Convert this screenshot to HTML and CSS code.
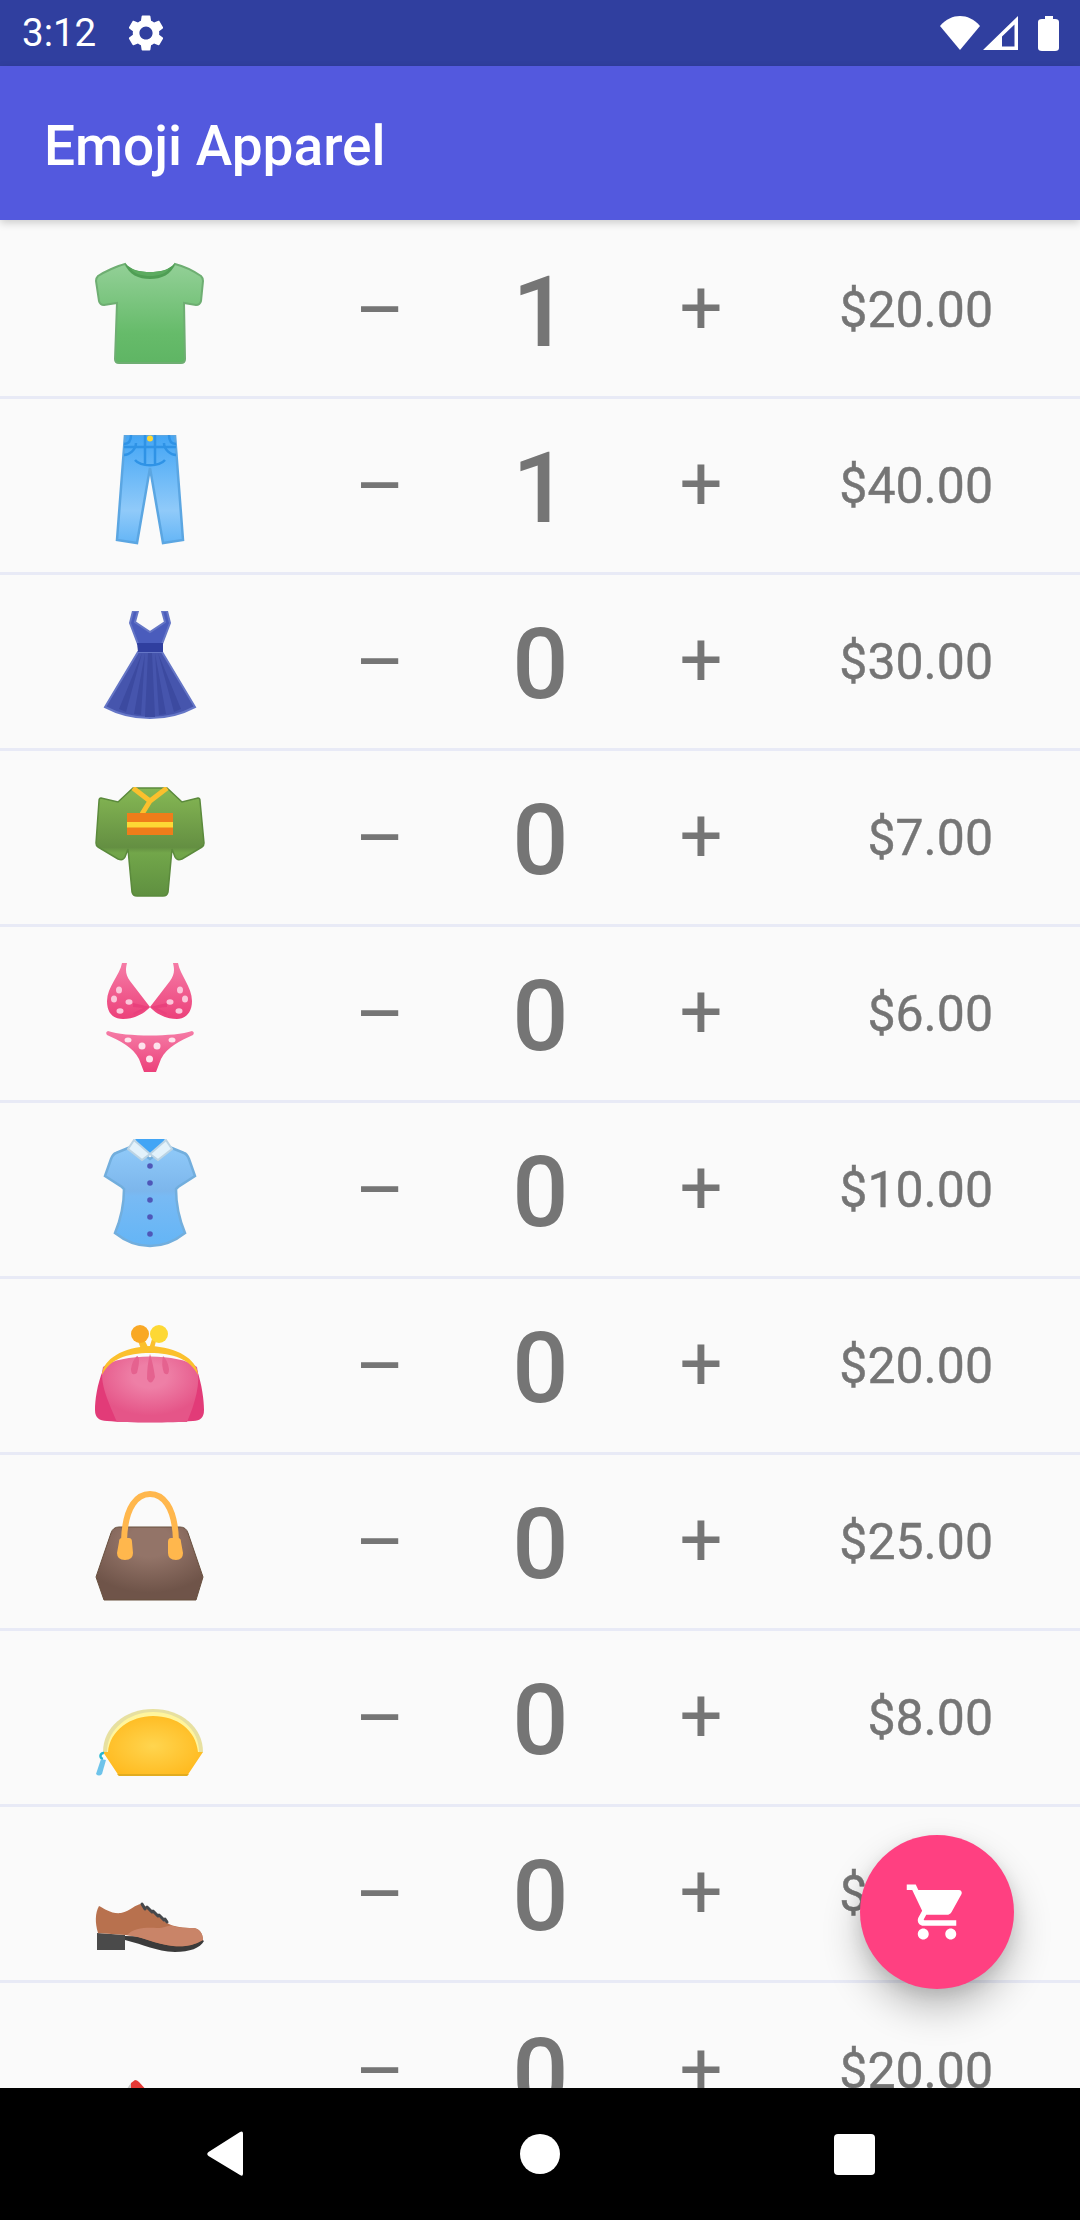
FILE: index.html
```html
<!DOCTYPE html>
<html lang="en">
<head>
    <meta charset="UTF-8">
    <meta name="viewport" content="width=device-width, initial-scale=1.0">
    <title>Emoji Apparel</title>
    <link rel="stylesheet" href="styles.css">
</head>
<body>

    <!-- Status bar -->
    <div class="status-bar">
        <span class="status-time">3:12</span>
        <svg class="status-gear" viewBox="0 0 24 24"><path fill="#fff" d="M19.14 12.94c.04-.3.06-.61.06-.94 0-.32-.02-.64-.07-.94l2.03-1.58c.18-.14.23-.41.12-.61l-1.92-3.32c-.12-.22-.37-.29-.59-.22l-2.39.96c-.5-.38-1.03-.7-1.62-.94l-.36-2.54c-.04-.24-.24-.41-.48-.41h-3.84c-.24 0-.43.17-.47.41l-.36 2.54c-.59.24-1.13.57-1.62.94l-2.39-.96c-.22-.08-.47 0-.59.22L2.74 8.87c-.12.21-.08.47.12.61l2.03 1.58c-.05.3-.09.63-.09.94s.02.64.07.94l-2.03 1.58c-.18.14-.23.41-.12.61l1.92 3.32c.12.22.37.29.59.22l2.39-.96c.5.38 1.03.7 1.62.94l.36 2.54c.05.24.24.41.48.41h3.84c.24 0 .44-.17.47-.41l.36-2.54c.59-.24 1.13-.56 1.62-.94l2.39.96c.22.08.47 0 .59-.22l1.92-3.32c.12-.22.07-.47-.12-.61l-2.01-1.58zM12 15.6c-1.98 0-3.6-1.62-3.6-3.6s1.62-3.6 3.6-3.6 3.6 1.62 3.6 3.6-1.62 3.6-3.6 3.6z"/></svg>
        <svg class="status-icons" viewBox="0 0 124 36">
            <path fill="#fff" d="M1 11 C7 4 14 1 21 1 C28 1 35 4 41 11 L21 35 Z"/>
            <path fill="#fff" fill-rule="evenodd" d="M44 35 L79 1 V35 Z M63 31.500 H75.500 V9.500 L63 21.500 Z"/>
            <path fill="#fff" d="M106 4 V1 H114 V4 H116 Q120 4 120 7 V33 Q120 36 116 36 H103 Q99 36 99 33 V7 Q99 4 103 4 Z"/>
        </svg>
    </div>

    <!-- App bar -->
    <header class="app-bar">
        <h1 class="app-title">Emoji Apparel</h1>
    </header>

    <!-- Product list -->
    <main class="product-list">

        <div class="product-row">
            <svg class="product-emoji" viewBox="0 0 110 110">
                <defs><linearGradient id="shirtFill" x1="0" y1="0" x2="0" y2="1"><stop offset="0" stop-color="#93d097"/><stop offset="0.7" stop-color="#66bb6a"/><stop offset="1" stop-color="#5fb564"/></linearGradient></defs>
                <path fill="url(#shirtFill)" stroke="#6eae72" stroke-width="2" d="M30 5 C22 7 9 13 3 17 Q1 19 1 22 L4 42 Q5 46 9 46 L22 44 L20 100 Q20 104 24 104 L86 104 Q90 104 90 100 L89 44 L101 46 Q105 46 106 42 L108 22 Q108 19 106 17 C100 13 88 7 80 5 C75 13 65 15 55 15 C45 15 35 13 30 5 Z"/>
                <path fill="#4f9e54" d="M30 4 C33 16 44 20 55 20 C66 20 77 16 80 4 C74 11 65 13 55 13 C45 13 36 11 30 4 Z"/>
                <path fill="#5cab60" d="M35 9 C40 12 47 13 55 13 C63 13 70 12 75 9 C71 15 63 17 55 17 C47 17 39 15 35 9 Z"/>
            </svg>
            <span class="qty-btn qty-minus">–</span>
            <span class="qty-value">1</span>
            <span class="qty-btn">+</span>
            <span class="product-price">$20.00</span>
        </div>

        <div class="product-row">
            <svg class="product-emoji" viewBox="0 0 110 110">
                <defs><linearGradient id="jeansFill" x1="0" y1="0" x2="0" y2="1"><stop offset="0" stop-color="#42a5f5"/><stop offset="0.7" stop-color="#90caf9"/><stop offset="1" stop-color="#64b5f6"/></linearGradient></defs>
                <path fill="url(#jeansFill)" stroke="#5ba6e2" stroke-width="2.500" d="M30 0 L22 105 L42 108 L55 33 L68 108 L88 105 L80 0 Z"/>
                <path fill="none" stroke="#2f93e6" stroke-width="2.500" d="M29 9 C34 9 36 5 36 0 M81 9 C76 9 74 5 74 0 M29 12 H81 M29 20 C34 20 41 15 41 8 M81 20 C76 20 69 15 69 8 M50 0 V30 M60 0 V30 M40 25 C46 32 64 32 70 25"/>
                <circle cx="55" cy="3.500" r="3" fill="#fdd835"/>
            </svg>
            <span class="qty-btn qty-minus">–</span>
            <span class="qty-value">1</span>
            <span class="qty-btn">+</span>
            <span class="product-price">$40.00</span>
        </div>

        <div class="product-row">
            <svg class="product-emoji" viewBox="0 0 110 110">
                <path fill="#4a5cbc" stroke="#6576c6" stroke-width="2" d="M38 0 L35 12 L43 33 L67 33 L75 12 L72 0 L67 0 L70 11 L55 21 L40 11 L43 0 Z"/>
                <path fill="#4655ad" stroke="#6576c6" stroke-width="2" d="M43 41 L67 41 L100 96 C85 104 70 107 55 107 C40 107 25 104 10 96 Z"/>
                <path fill="#3c4aa0" d="M50 42 L46 104 L39 103 Z M60 42 L64 104 L71 103 Z M47 42 L24 98 L31 101 Z M63 42 L86 98 L79 101 Z M53 42 H57 L60 106 H50 Z"/>
                <path fill="#303f9f" d="M42 32 H68 V41 H43 Z"/>
            </svg>
            <span class="qty-btn qty-minus">–</span>
            <span class="qty-value">0</span>
            <span class="qty-btn">+</span>
            <span class="product-price">$30.00</span>
        </div>

        <div class="product-row">
            <svg class="product-emoji" viewBox="0 0 110 110">
                <defs><linearGradient id="kimonoFill" x1="0" y1="0" x2="0" y2="1"><stop offset="0" stop-color="#86b854"/><stop offset="0.55" stop-color="#648f42"/><stop offset="0.6" stop-color="#72a64a"/><stop offset="1" stop-color="#5f9040"/></linearGradient></defs>
                <path fill="url(#kimonoFill)" stroke="#5b8a3c" stroke-width="1.500" d="M38 1 L23 15 L6 11 Q4 11 4 14 L1 56 Q1 59 3 60 L23 72 Q28 74 30 70 L33 62 L37 105 Q38 109 42 109 L68 109 Q72 109 73 105 L77 62 L80 70 Q82 74 87 72 L107 60 Q109 59 109 56 L105 14 Q105 11 103 11 L87 15 L72 1 Z"/>
                <path fill="none" stroke="#fbc02d" stroke-width="5" d="M38 1 L55 14 L72 1 M55 14 L47 27"/>
                <rect x="32" y="26" width="46" height="22" fill="#ef7d1a"/>
                <rect x="32" y="35" width="46" height="5.500" fill="#fdd835"/>
            </svg>
            <span class="qty-btn qty-minus">–</span>
            <span class="qty-value">0</span>
            <span class="qty-btn">+</span>
            <span class="product-price">$7.00</span>
        </div>

        <div class="product-row">
            <svg class="product-emoji" viewBox="0 0 110 110">
                <defs><linearGradient id="bikiniFill" x1="0" y1="0" x2="0" y2="1"><stop offset="0" stop-color="#f57ca6"/><stop offset="1" stop-color="#ec407a"/></linearGradient></defs>
                <path fill="url(#bikiniFill)" d="M27 0 L32 0 C30 8 31 12 35 18 C41 26 49 36 55 44 C61 36 69 26 75 18 C79 12 80 8 78 0 L83 0 C85 12 97 24 97 38 C97 50 90 56 82 56 C70 56 60 50 55 44 C50 50 40 56 28 56 C18 56 12 50 12 38 C12 24 25 12 27 0 Z"/>
                <path fill="#e9407c" d="M55 44 L38 40 L38 44 L48 45 L38 50 L39 52 Z M55 44 L72 40 L72 44 L62 45 L72 50 L71 52 Z"/>
                <g fill="#fbc6da">
                    <ellipse cx="24" cy="27" rx="3" ry="3.500"/><ellipse cx="19" cy="36" rx="3" ry="3.500"/><ellipse cx="34" cy="39" rx="3.500" ry="2.800"/><ellipse cx="25" cy="48" rx="3.500" ry="2.800"/>
                    <ellipse cx="85" cy="27" rx="3" ry="3.500"/><ellipse cx="90" cy="36" rx="3" ry="3.500"/><ellipse cx="75" cy="39" rx="3.500" ry="2.800"/><ellipse cx="84" cy="48" rx="3.500" ry="2.800"/>
                </g>
                <path fill="url(#bikiniFill)" d="M13 68 C30 74 80 74 97 68 Q100 69 98 72 C85 78 72 84 66 96 L61 109 H49 L44 96 C38 84 25 78 12 72 Q10 69 13 68 Z"/>
                <g fill="#fde3ec">
                    <ellipse cx="33" cy="77" rx="3.500" ry="2.500"/><circle cx="47" cy="83" r="3.500"/><circle cx="62" cy="83" r="3.500"/><ellipse cx="77" cy="77" rx="3.500" ry="2.500"/><circle cx="54.500" cy="96" r="3.500"/>
                </g>
            </svg>
            <span class="qty-btn qty-minus">–</span>
            <span class="qty-value">0</span>
            <span class="qty-btn">+</span>
            <span class="product-price">$6.00</span>
        </div>

        <div class="product-row">
            <svg class="product-emoji" viewBox="0 0 110 110">
                <defs><linearGradient id="blouseFill" x1="0" y1="0" x2="0" y2="1"><stop offset="0" stop-color="#90caf9"/><stop offset="0.45" stop-color="#7cb6ec"/><stop offset="0.5" stop-color="#78baf4"/><stop offset="1" stop-color="#64b5f6"/></linearGradient></defs>
                <path fill="#42a5f5" d="M40 0 H70 L60 16 H50 Z"/>
                <path fill="url(#blouseFill)" stroke="#72aedd" stroke-width="2.500" d="M38 7 L21 14 Q18 15 16 20 L10 37 L27 48 L29 50 C29 68 25 82 20 94 C30 102 42 107 55 107 C68 107 80 102 90 94 C85 82 81 68 81 50 L83 48 L100 37 L94 20 Q92 15 89 14 L72 7 L55 20 Z"/>
                <path fill="#e3f2fb" stroke="#bcd4e4" stroke-width="2" d="M39 1 L33 10 L47 21 L55 15 L63 21 L77 10 L71 1 L55 15 Z"/>
                <g fill="#4f57b8"><circle cx="55" cy="27" r="2.800"/><circle cx="55" cy="44" r="2.800"/><circle cx="55" cy="61" r="2.800"/><circle cx="55" cy="78" r="2.800"/><circle cx="55" cy="95" r="2.800"/></g>
            </svg>
            <span class="qty-btn qty-minus">–</span>
            <span class="qty-value">0</span>
            <span class="qty-btn">+</span>
            <span class="product-price">$10.00</span>
        </div>

        <div class="product-row">
            <svg class="product-emoji" viewBox="0 0 110 110">
                <defs><radialGradient id="purseFill" cx="0.5" cy="0.3" r="0.6"><stop offset="0.3" stop-color="#ee7fa6"/><stop offset="1" stop-color="#e55588"/></radialGradient></defs>
                <path fill="#e23b78" d="M8 55 C2 70 0 85 0 95 Q0 106 12 106 C35 108 75 108 98 106 Q109 106 109 95 C109 85 107 70 102 55 Z"/>
                <path fill="url(#purseFill)" d="M8 52 C25 38 85 38 102 52 C106 68 100 88 92 107 H22 C14 88 4 68 8 52 Z"/>
                <path fill="#fbc02d" d="M7 60 C8 44 28 32 55 31 C82 32 102 44 103 60 C95 44 78 38 55 38 C32 38 15 44 7 60 Z"/>
                <path fill="#e5628f" d="M42 41 Q46 42 42 58 Q36 62 36 54 Q37 46 42 41 Z M55 39 Q58 48 60 62 Q56 72 52 64 Q52 50 55 39 Z M68 41 Q73 46 74 54 Q74 62 69 58 Q66 50 68 41 Z"/>
                <path fill="#fbc02d" d="M48 22 L54 34 L46 34 L43 26 Z M61 26 L59 34 L54 34 L57 24 Z"/>
                <circle cx="45" cy="19" r="9" fill="#f9a825"/>
                <circle cx="64" cy="19" r="9" fill="#fdd835"/>
            </svg>
            <span class="qty-btn qty-minus">–</span>
            <span class="qty-value">0</span>
            <span class="qty-btn">+</span>
            <span class="product-price">$20.00</span>
        </div>

        <div class="product-row">
            <svg class="product-emoji" viewBox="0 0 110 110">
                <defs><radialGradient id="bagFill" cx="0.5" cy="0.2" r="0.7"><stop offset="0.3" stop-color="#937468"/><stop offset="1" stop-color="#6f5449"/></radialGradient></defs>
                <path fill="url(#bagFill)" stroke="#68503f" stroke-width="1" d="M24 36 H85 Q91 36 93 42 L108 86 L101 109 H9 L1 86 L16 42 Q18 36 24 36 Z"/>
                <path fill="none" stroke="#ffb74d" stroke-width="6" d="M29 50 C30 14 43 3 55 3 C67 3 80 14 81 50"/>
                <path fill="#ffb74d" d="M27 47 H34 Q37 47 37 51 L38 62 Q38 69 30 69 Q22 69 22 62 L24 51 Q24 47 27 47 Z M76 47 H83 Q86 47 86 51 L88 62 Q88 69 81 69 Q73 69 73 62 L73 51 Q73 47 76 47 Z"/>
            </svg>
            <span class="qty-btn qty-minus">–</span>
            <span class="qty-value">0</span>
            <span class="qty-btn">+</span>
            <span class="product-price">$25.00</span>
        </div>

        <div class="product-row">
            <svg class="product-emoji" viewBox="0 0 110 110">
                <defs><radialGradient id="pouchFill" cx="0.5" cy="0.5" r="0.6"><stop offset="0" stop-color="#ffd54f"/><stop offset="1" stop-color="#ffb81c"/></radialGradient></defs>
                <path fill="#e7e0a0" d="M8 85 C8 60 30 42 58 42 C86 42 108 60 108 85 L100 88 H14 Z"/>
                <path fill="#fff59d" d="M12 85 C12 62 34 45 58 45 C84 45 104 62 104 85 Z"/>
                <path fill="url(#pouchFill)" d="M13 85 C15 63 36 49 58 49 C82 49 101 63 103 85 L108 85 L92 109 H24 L8 85 Z"/>
                <path fill="#e2ac1f" d="M22 107 H94 L92 109 H24 Z"/>
                <path fill="none" stroke="#26b6cf" stroke-width="2.500" d="M8 92 A3 3 0 1 1 9 86"/>
                <path fill="#6ec3ea" d="M6 92 L11 93 L7 107 Q4 110 1 107 Z"/>
            </svg>
            <span class="qty-btn qty-minus">–</span>
            <span class="qty-value">0</span>
            <span class="qty-btn">+</span>
            <span class="product-price">$8.00</span>
        </div>

        <div class="product-row">
            <svg class="product-emoji" viewBox="0 0 110 110">
                <path fill="#4a4a4a" d="M2 90 L30 92 L30 107 H2 Z"/>
                <path fill="#3b3b3b" d="M30 97 C50 102 60 108 80 109 C95 109 105 105 109 98 L105 95 L30 93 Z"/>
                <path fill="#b8714e" d="M4 63 C10 66 16 71 26 70 C36 68 40 61 47 61 L54 66 L72 80 C78 84 90 85 98 85 C104 85 108 90 108 97 C98 103 88 104 78 103 C60 101 48 93 30 92 L3 90 C0 80 0 70 4 63 Z"/>
                <path fill="#c98468" d="M32 92 C38 85 52 84 62 85 C70 85 76 81 78 83 C84 85 92 85 98 85 C104 85 108 90 108 97 C98 103 88 104 78 103 C60 101 48 94 32 92 Z"/>
                <path fill="none" stroke="#45474b" stroke-width="3" stroke-linecap="round" d="M47 61 L50 66 M52 64 L57 69 M58 68 L63 73 M64 72 L69 77 M70 76 L72 79"/>
            </svg>
            <span class="qty-btn qty-minus">–</span>
            <span class="qty-value">0</span>
            <span class="qty-btn">+</span>
            <span class="product-price">$20.00</span>
        </div>

        <div class="product-row">
            <svg class="product-emoji" viewBox="0 0 110 110">
                <path fill="#c9c9c9" d="M0 72 L5 68 L9 72 Z M29 72 L36 62 L36 72 Z"/>
                <path fill="#e53935" d="M36 62 L40 59 Q42 59 44 61 L54 72 H36 Z"/>
            </svg>
            <span class="qty-btn qty-minus">–</span>
            <span class="qty-value">0</span>
            <span class="qty-btn">+</span>
            <span class="product-price">$20.00</span>
        </div>

    </main>

    <!-- Cart button -->
    <button class="cart-fab">
        <svg class="cart-icon" viewBox="0 0 24 24"><path fill="#fff" d="M7 18c-1.100 0-1.990.9-1.990 2S5.900 22 7 22s2-.9 2-2-.9-2-2-2zM1 2v2h2l3.600 7.590-1.350 2.450c-.16.28-.25.61-.25.96 0 1.100.9 2 2 2h12v-2H7.420c-.14 0-.25-.11-.25-.25l.03-.12.9-1.630h7.450c.75 0 1.410-.41 1.750-1.030l3.580-6.470c.08-.14.12-.31.12-.48 0-.55-.45-1-1-1H5.210l-.94-2H1zm16 16c-1.100 0-1.990.9-1.990 2s.89 2 1.990 2 2-.9 2-2-.9-2-2-2z"/></svg>
    </button>

    <!-- Navigation bar -->
    <nav class="nav-bar">
        <svg class="nav-icon" viewBox="0 0 66 66"><path fill="#fff" d="M50 12.500 V52.500 Q50 56 47 54 L15.500 35 Q13 33 15.500 31 L47 11 Q50 9.500 50 12.500 Z"/></svg>
        <svg class="nav-icon" viewBox="0 0 66 66"><circle cx="33" cy="33" r="20" fill="#fff"/></svg>
        <svg class="nav-icon" viewBox="0 0 66 66"><rect x="13" y="13" width="41" height="41" rx="4" fill="#fff"/></svg>
    </nav>

</body>
</html>
```

FILE: styles.css
```css
* {
    box-sizing: border-box;
}

html,
body {
    margin: 0;
    padding: 0;
}

body {
    position: relative;
    display: flex;
    flex-direction: column;
    width: 1080px;
    height: 2220px;
    overflow: hidden;
    background-color: #fafafa;
    font-family: Roboto, "Liberation Sans", sans-serif;
}

/* Status bar */
.status-bar {
    display: flex;
    align-items: center;
    flex: none;
    height: 66px;
    padding-left: 22px;
    padding-right: 17px;
    background-color: #303f9f;
    color: #fff;
}

.status-time {
    font-size: 38.5px;
    line-height: 66px;
}

.status-gear {
    width: 44px;
    height: 44px;
    margin-left: 28px;
}

.status-icons {
    width: 124px;
    height: 36px;
    margin-left: auto;
    margin-top: -1px;
}

/* App bar */
.app-bar {
    position: relative;
    z-index: 2;
    display: flex;
    align-items: center;
    flex: none;
    height: 154px;
    padding-left: 44px;
    padding-top: 5px;
    background-color: #5359de;
    box-shadow: 0 3px 8px rgba(0, 0, 0, 0.18);
}

.app-title {
    margin: 0;
    color: #fff;
    font-size: 55px;
    font-weight: 500;
}

/* Product rows */
.product-list {
    flex: 1;
    min-height: 0;
    overflow: hidden;
    padding-top: 3px;
}

.product-row {
    display: grid;
    grid-template-columns: 300px 160px 161px 160px 212px;
    align-items: center;
    height: 176px;
    padding-bottom: 3px;
    border-bottom: 3px solid #e8eaf6;
    color: #757575;
}

.product-row:last-child {
    border-bottom: none;
}

.product-emoji {
    display: block;
    width: 110px;
    height: 110px;
    margin-left: 95px;
    margin-top: 12px;
}

.qty-btn {
    font-size: 76px;
    line-height: 100px;
    text-align: center;
}

.qty-minus {
    margin-top: 3px;
}

.qty-value {
    font-size: 99px;
    font-weight: 500;
    line-height: 116px;
    text-align: center;
    margin-top: 8px;
}

.product-price {
    font-size: 50px;
    line-height: 60px;
    margin-top: 3px;
    text-align: right;
    -webkit-text-stroke: 0.4px #757575;
}

/* Cart button */
.cart-fab {
    position: absolute;
    left: 860px;
    top: 1835px;
    z-index: 3;
    display: flex;
    align-items: center;
    justify-content: center;
    width: 154px;
    height: 154px;
    padding: 0;
    border: none;
    border-radius: 50%;
    background-color: #ff4081;
    box-shadow: 0 20px 38px rgba(0, 0, 0, 0.24), 0 6px 16px rgba(0, 0, 0, 0.1);
}

.cart-icon {
    width: 66px;
    height: 66px;
}

/* Navigation bar */
.nav-bar {
    position: relative;
    z-index: 2;
    display: flex;
    align-items: center;
    justify-content: center;
    gap: 248px;
    flex: none;
    height: 132px;
    background-color: #000;
}

.nav-icon {
    width: 66px;
    height: 66px;
}
```
